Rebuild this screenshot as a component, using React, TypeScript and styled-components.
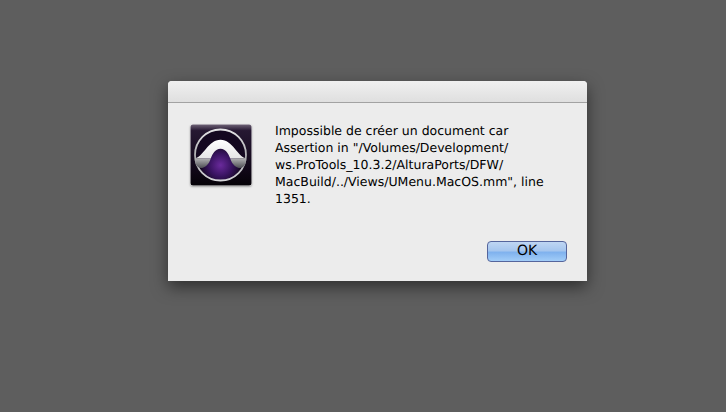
import React from "react";
import styled, { createGlobalStyle } from "styled-components";

const GlobalStyle = createGlobalStyle`
  html, body {
    margin: 0;
    padding: 0;
    background: #5e5e5e;
  }
`;

const Desktop = styled.div`
  width: 726px;
  height: 412px;
  box-sizing: border-box;
  padding: 81px 0 0 168px;
  background: #5e5e5e;
  overflow: hidden;
`;

const Dialog = styled.div`
  width: 419px;
  height: 200px;
  display: flex;
  flex-direction: column;
  background: #ececec;
  border-radius: 4px 4px 0 0;
  box-shadow: 0 6px 16px rgba(0, 0, 0, 0.5);
  overflow: hidden;
`;

const TitleBar = styled.div`
  height: 21px;
  flex: none;
  background: linear-gradient(#f0f0f0, #dfdfdf);
  border-bottom: 1px solid #a2a2a2;
`;

const Body = styled.div`
  flex: 1;
  display: flex;
  padding: 21px 20px 0 22px;
  gap: 23px;
`;

const IconBox = styled.div`
  width: 62px;
  height: 62px;
  flex: none;
  border-radius: 3px;
  box-shadow: 0 1px 2px rgba(0, 0, 0, 0.3);
`;

const Content = styled.div`
  flex: 1;
  display: flex;
  flex-direction: column;
`;

const Message = styled.div`
  height: 117px;
  margin-top: -2px;
  margin-bottom: 2px;
  font-family: "DejaVu Sans", sans-serif;
  font-size: 12.5px;
  line-height: 17px;
  color: #000;
  white-space: nowrap;
  text-rendering: geometricPrecision;
`;

const Footer = styled.div`
  display: flex;
  justify-content: flex-end;
`;

const OkButton = styled.button`
  width: 80px;
  height: 21px;
  padding: 0;
  box-sizing: border-box;
  border: 1px solid #55659c;
  border-radius: 4px;
  background: linear-gradient(#bfd6f3 0%, #a6c6ee 45%, #80b2ee 55%, #a2cdf8 100%);
  font-family: "DejaVu Sans", sans-serif;
  font-size: 14px;
  line-height: 19px;
  color: #000;
  text-rendering: geometricPrecision;
`;

function ProToolsIcon() {
  return (
    <svg width="62" height="62" viewBox="0 0 62 62" display="block">
      <defs>
        <linearGradient id="tile" x1="0" y1="0" x2="0" y2="1">
          <stop offset="0" stopColor="#6e6276" />
          <stop offset="0.1" stopColor="#261832" />
          <stop offset="0.7" stopColor="#12081a" />
          <stop offset="1" stopColor="#050207" />
        </linearGradient>
        <radialGradient id="glow" cx="0.5" cy="0.7" r="0.4">
          <stop offset="0" stopColor="#6a2a9c" />
          <stop offset="0.55" stopColor="#381360" />
          <stop offset="1" stopColor="#140820" />
        </radialGradient>
        <linearGradient id="ring" x1="0" y1="0" x2="0" y2="1">
          <stop offset="0" stopColor="#e4e4e6" />
          <stop offset="0.55" stopColor="#a8a8ac" />
          <stop offset="1" stopColor="#d6d6d9" />
        </linearGradient>
        <linearGradient id="arch" x1="0" y1="0" x2="0" y2="1">
          <stop offset="0" stopColor="#ffffff" />
          <stop offset="1" stopColor="#e6e6e6" />
        </linearGradient>
        <linearGradient id="foot" x1="0" y1="0" x2="0" y2="1">
          <stop offset="0" stopColor="#b4b4b6" />
          <stop offset="1" stopColor="#4e4e54" />
        </linearGradient>
      </defs>
      <rect x="0.5" y="0.5" width="61" height="61" rx="2.5" fill="url(#tile)" />
      <circle cx="30.5" cy="31" r="25.5" fill="url(#glow)" stroke="url(#ring)" strokeWidth="1.8" />
      <path
        d="M5.5 34.2 C13 33 18.5 15.8 30.5 15.8 C42.5 15.8 48 33 55.5 34.2 L40.2 34.2 C38.5 30.5 36 24.8 30.5 24.8 C25 24.8 22.5 30.5 20.8 34.2 Z"
        fill="url(#arch)"
      />
      <path
        d="M5.2 34.2 L20.8 34.2 C19 41 14.2 44 10.8 44 C7.5 43.5 5.6 41 5.2 38 Z"
        fill="url(#foot)"
      />
      <path
        d="M55.8 34.2 L40.2 34.2 C42 41 46.8 44 50.2 44 C53.5 43.5 55.4 41 55.8 38 Z"
        fill="url(#foot)"
      />
    </svg>
  );
}

export default function App() {
  return (
    <>
      <GlobalStyle />
      <Desktop>
        <Dialog>
          <TitleBar />
          <Body>
            <IconBox>
              <ProToolsIcon />
            </IconBox>
            <Content>
              <Message>
                Impossible de créer un document car
                <br />
                Assertion in "/Volumes/Development/
                <br />
                ws.ProTools_10.3.2/AlturaPorts/DFW/
                <br />
                MacBuild/../Views/UMenu.MacOS.mm", line
                <br />
                1351.
              </Message>
              <Footer>
                <OkButton>OK</OkButton>
              </Footer>
            </Content>
          </Body>
        </Dialog>
      </Desktop>
    </>
  );
}
